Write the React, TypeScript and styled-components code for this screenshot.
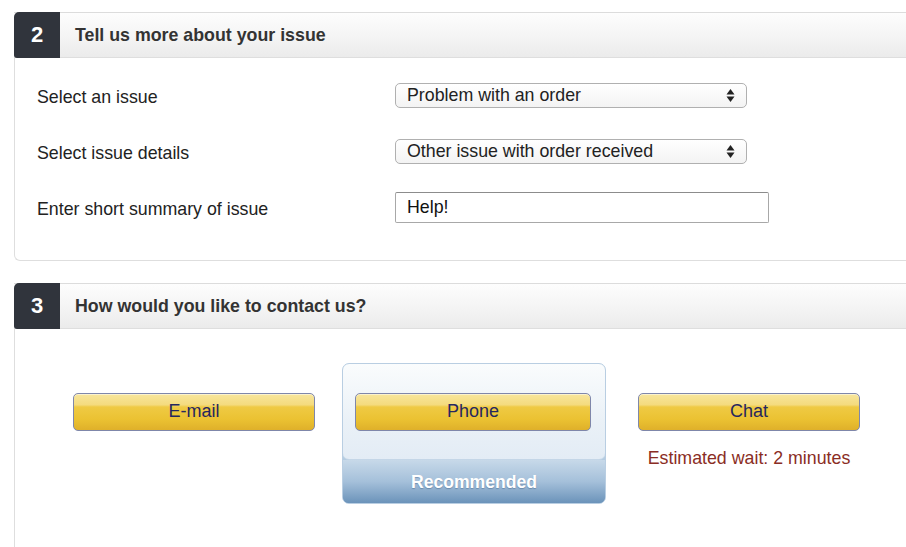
import styled, { createGlobalStyle } from 'styled-components'

const GlobalStyle = createGlobalStyle`
  html, body {
    margin: 0;
    padding: 0;
    background: #fff;
    overflow: hidden;
  }
  body {
    font-family: "Liberation Sans", Arial, Helvetica, sans-serif;
  }
`

type Option = { label: string; value: string }

const issueOptions: Option[] = [
  { label: 'Problem with an order', value: 'order' },
]

const detailOptions: Option[] = [
  { label: 'Other issue with order received', value: 'other' },
]

function SelectArrows() {
  return (
    <svg width="9" height="15" viewBox="0 0 9 15">
      <path d="M4.5 1 L8.5 6.5 L0.5 6.5 Z" fill="#222" />
      <path d="M4.5 14 L8.5 8.5 L0.5 8.5 Z" fill="#222" />
    </svg>
  )
}

function FakeSelect({ options }: { options: Option[] }) {
  return (
    <SelectBox>
      <span>{options[0].label}</span>
      <SelectArrows />
    </SelectBox>
  )
}

function Step({ num, title, children }: { num: number; title: string; children: React.ReactNode }) {
  return (
    <Section>
      <Header>
        <StepNumber>{num}</StepNumber>
        <StepTitle>{title}</StepTitle>
      </Header>
      {children}
    </Section>
  )
}

function App() {
  return (
    <>
      <GlobalStyle />
      <Page>
        <Step num={2} title="Tell us more about your issue">
          <Body>
            <Form>
              <Label>Select an issue</Label>
              <FakeSelect options={issueOptions} />

              <Label>Select issue details</Label>
              <FakeSelect options={detailOptions} />

              <Label>Enter short summary of issue</Label>
              <TextInput defaultValue="Help!" />
            </Form>
          </Body>
        </Step>

        <Step num={3} title="How would you like to contact us?">
          <Body $open>
            <Contacts>
              <Column $width={242}>
                <YellowButton>E-mail</YellowButton>
              </Column>

              <Recommended>
                <RecommendedInner>
                  <YellowButton>Phone</YellowButton>
                </RecommendedInner>
                <RecommendedLabel>Recommended</RecommendedLabel>
              </Recommended>

              <Column $width={222}>
                <YellowButton>Chat</YellowButton>
                <WaitNote>Estimated wait: 2 minutes</WaitNote>
              </Column>
            </Contacts>
          </Body>
        </Step>
      </Page>
    </>
  )
}

const Page = styled.div`
  padding: 12px 0 0 14px;
  display: flex;
  flex-direction: column;
  gap: 22px;
  width: 920px;
`

const Section = styled.section`
  display: flex;
  flex-direction: column;
`

const Header = styled.header`
  display: flex;
  align-items: stretch;
  height: 44px;
  border-top: 1px solid #dcdcdc;
  border-bottom: 1px solid #dedede;
  background: linear-gradient(#fdfdfd, #f4f4f4 55%, #ebebeb);
`

const StepNumber = styled.div`
  width: 46px;
  margin-top: -1px;
  margin-bottom: -1px;
  display: flex;
  align-items: center;
  justify-content: center;
  background: #30343c;
  border-radius: 5px 0 0 3px;
  color: #fff;
  font-weight: bold;
  font-size: 22px;
`

const StepTitle = styled.h2`
  margin: 0 0 0 15px;
  align-self: center;
  font-size: 17.8px;
  font-weight: bold;
  color: #333;
`

const Body = styled.div<{ $open?: boolean }>`
  border-left: 1px solid #dedede;
  border-bottom: ${p => (p.$open ? 'none' : '1px solid #dedede')};
  border-bottom-left-radius: ${p => (p.$open ? '0' : '6px')};
  min-height: ${p => (p.$open ? '240px' : 'auto')};
`

const Form = styled.div`
  display: grid;
  grid-template-columns: 358px auto;
  grid-auto-rows: 33px;
  row-gap: 23px;
  align-items: center;
  justify-items: start;
  padding: 21px 0 36px 22px;
`

const Label = styled.label`
  font-size: 17.8px;
  color: #222;
  padding-top: 4px;
`

const SelectBox = styled.div`
  box-sizing: border-box;
  width: 352px;
  height: 25px;
  display: flex;
  align-items: center;
  justify-content: space-between;
  padding: 0 11px 0 11px;
  border: 1px solid #b0b0b0;
  border-radius: 5px;
  background: linear-gradient(#ffffff, #f3f3f3);
  font-size: 17.8px;
  color: #222;
`

const TextInput = styled.input`
  box-sizing: border-box;
  width: 374px;
  height: 31px;
  padding: 0 11px;
  border: 1px solid #a8a8a8;
  border-top-color: #8c8c8c;
  border-radius: 2px;
  font-family: inherit;
  font-size: 17.8px;
  color: #111;
  outline: none;
`

const Contacts = styled.div`
  display: flex;
  align-items: flex-start;
  padding: 34px 0 0 58px;
`

const Column = styled.div<{ $width: number }>`
  width: ${p => p.$width}px;
  margin-top: 30px;
  display: flex;
  flex-direction: column;
  align-items: center;
  &:first-child {
    margin-right: 27px;
  }
  &:last-child {
    margin-left: 32px;
  }
`

const YellowButton = styled.button`
  box-sizing: border-box;
  width: 100%;
  height: 38px;
  border: 1px solid #7f87aa;
  border-radius: 5px;
  background: linear-gradient(#f8e69c 0%, #f4db7e 30%, #efca44 36%, #ebc232 70%, #dfb02a 100%);
  box-shadow: inset 0 1px 0 rgba(255, 255, 255, 0.5);
  font-family: inherit;
  font-size: 18px;
  color: #26275f;
  padding: 0 0 2px;
  cursor: pointer;
`

const Recommended = styled.div`
  box-sizing: border-box;
  width: 264px;
  height: 141px;
  display: flex;
  flex-direction: column;
  border: 1px solid #b9cee2;
  border-radius: 7px;
  background: linear-gradient(#d4e3ef, #c3d7e8 60%, #a9c3dc 75%, #6a92ba 100%);
  overflow: hidden;
`

const RecommendedInner = styled.div`
  box-sizing: border-box;
  height: 97px;
  margin: -1px -1px 0;
  padding: 29px 14px 0 12px;
  border: 1px solid #c4d6e7;
  border-radius: 7px;
  background: linear-gradient(#fafcfd, #eaf1f7 60%, #e3ecf5);
`

const RecommendedLabel = styled.div`
  flex: 1;
  display: flex;
  align-items: center;
  justify-content: center;
  padding-top: 2px;
  color: #fff;
  font-weight: bold;
  font-size: 17.6px;
  text-shadow: 0 1px 1px rgba(60, 90, 130, 0.45);
  background: linear-gradient(#c7d9e9, #a5c0da 50%, #6b93ba);
`

const WaitNote = styled.div`
  margin-top: 17px;
  font-size: 17.8px;
  color: #8a2d24;
`

export default App
